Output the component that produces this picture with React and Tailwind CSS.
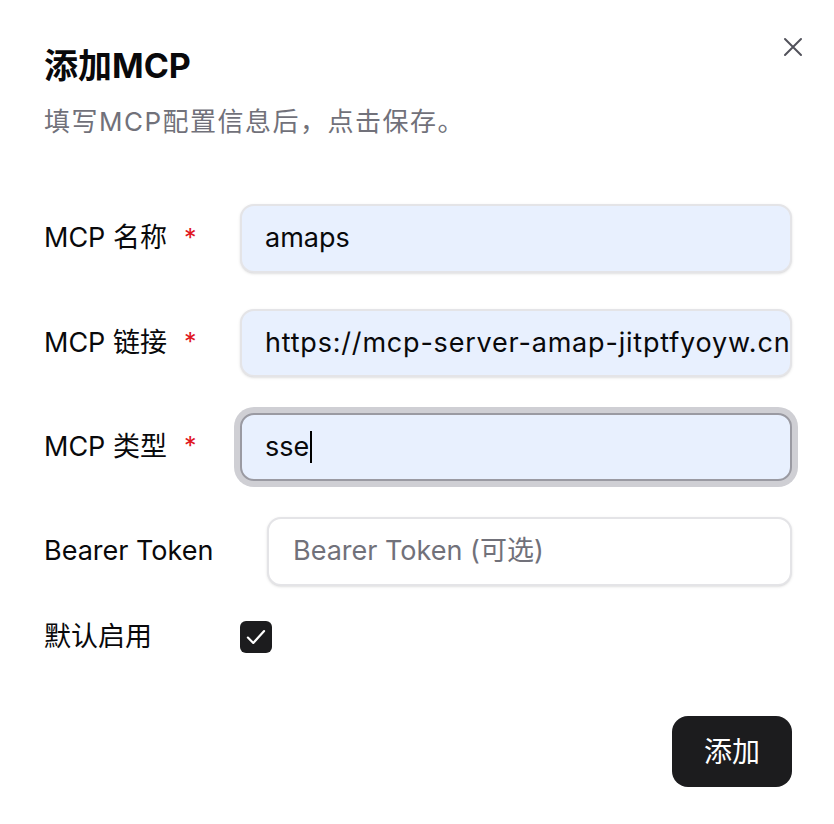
import React from "react";

const font = { fontFamily: 'Inter, "Noto Sans CJK SC", sans-serif' };

function Label({ children, required, w }) {
  return (
    <div className={`${w} shrink-0 flex items-center text-[27px] text-[#09090b]`}>
      <span>{children}</span>
      {required && <span className="ml-[17px] text-[#e0161e] text-[25px]">*</span>}
    </div>
  );
}

export default function App() {
  return (
    <div className="w-[834px] h-[824px] bg-white relative" style={font}>
      <button className="absolute left-[783px] top-[37px] w-[20px] h-[20px] text-[#52525b]">
        <svg viewBox="0 0 20 20" width="20" height="20" fill="none" stroke="currentColor" strokeWidth="2" strokeLinecap="round">
          <path d="M2 2L18 18M18 2L2 18" />
        </svg>
      </button>
      <div className="pl-[44px] pr-[42px] pt-[44px]">
        <h1 className="text-[34px] font-bold leading-[44px] text-[#09090b]">添加MCP</h1>
        <p className="mt-[16px] text-[26px] tracking-[1.5px] leading-[36px] text-[#71717a]">填写MCP配置信息后，点击保存。</p>

        <div className="mt-[64px] flex flex-col gap-[36px]">
          <div className="flex items-center">
            <Label required w="w-[196px]">MCP 名称</Label>
            <div className="flex-1 h-[69px] rounded-[14px] border-2 border-[#e4e4e7] bg-[#e8f0fe] shadow-sm flex items-center px-[23px] text-[27px] text-[#09090b] overflow-hidden whitespace-nowrap">
              amaps
            </div>
          </div>
          <div className="flex items-center">
            <Label required w="w-[196px]">MCP 链接</Label>
            <div className="flex-1 h-[68px] rounded-[14px] border-2 border-[#e4e4e7] bg-[#e8f0fe] shadow-sm flex items-center pl-[23px] text-[27px] tracking-[0.8px] text-[#09090b] overflow-hidden whitespace-nowrap">
              https://mcp-server-amap-jitptfyoyw.cn
            </div>
          </div>
          <div className="flex items-center">
            <Label required w="w-[196px]">MCP 类型</Label>
            <div className="flex-1 h-[68px] rounded-[14px] border-2 border-[#9a9aa2] bg-[#e8f0fe] ring-[6px] ring-[#cfcfd4] flex items-center px-[23px] text-[27px] text-[#09090b] overflow-hidden whitespace-nowrap">
              sse<span className="inline-block w-[2px] h-[32px] bg-black ml-[1px]" />
            </div>
          </div>
          <div className="flex items-center">
            <Label w="w-[223px]">Bearer Token</Label>
            <div className="flex-1 h-[69px] rounded-[14px] border-2 border-[#e4e4e7] bg-white shadow-sm flex items-center px-[24px] text-[27px] text-[#71717a] overflow-hidden whitespace-nowrap">
              Bearer Token (可选)
            </div>
          </div>
        </div>

        <div className="mt-[35px] flex items-center h-[32px]">
          <div className="w-[196px] shrink-0 text-[27px] text-[#09090b]">默认启用</div>
          <div className="w-[32px] h-[32px] rounded-[6px] bg-[#1c1c1e] flex items-center justify-center">
            <svg viewBox="0 0 24 24" width="26" height="26" fill="none" stroke="white" strokeWidth="2" strokeLinecap="round" strokeLinejoin="round">
              <path d="M4.5 12.5l5 5L19.5 6.5" />
            </svg>
          </div>
        </div>

        <div className="mt-[63px] flex justify-end">
          <button className="w-[120px] h-[71px] rounded-[16px] bg-[#1c1c1e] text-white text-[28px] flex items-center justify-center">
            添加
          </button>
        </div>
      </div>
    </div>
  );
}
